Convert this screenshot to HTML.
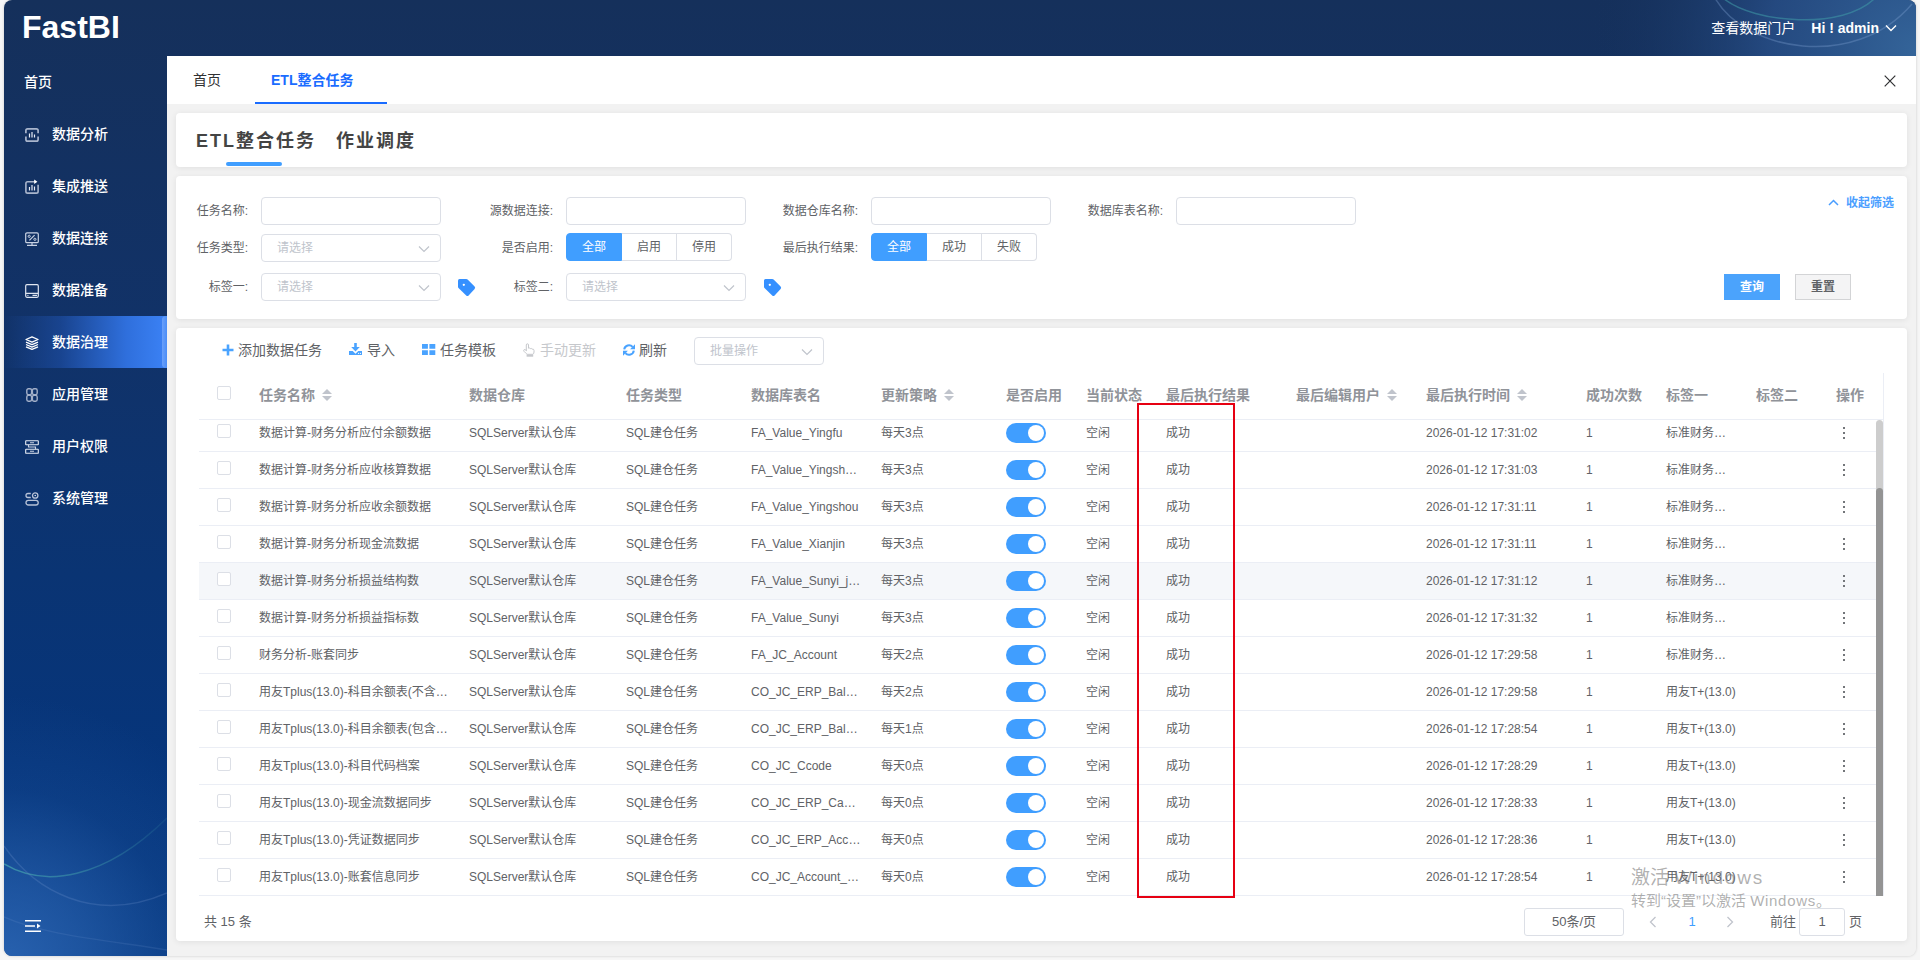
<!DOCTYPE html>
<html lang="zh-CN">
<head>
<meta charset="utf-8">
<title>FastBI - ETL整合任务</title>
<style>
*{box-sizing:border-box;margin:0;padding:0}
html,body{width:1920px;height:960px;overflow:hidden;background:#f6f6f6;font-family:"Liberation Sans","Noto Sans CJK SC",sans-serif;color:#606266;font-size:12px}
.abs{position:absolute}
#win{position:absolute;left:4px;top:0;width:1912px;height:956px;border-radius:8px;overflow:hidden;background:#f2f2f2;box-shadow:0 0 3px rgba(0,0,0,.18)}
#bg{position:absolute;left:0;top:0;width:1912px;height:956px}
#logo{position:absolute;left:18px;top:8px;font-size:32px;font-weight:bold;color:#fff;line-height:38px;letter-spacing:0}
#hdr-r{position:absolute;right:19px;top:0;height:56px;line-height:56px;color:#fff;font-size:14px;white-space:nowrap}
#hdr-r b{margin-left:16px}
#side{position:absolute;left:0;top:56px;width:163px;height:900px}
.mi{position:absolute;left:0;width:163px;height:52px;line-height:52px;color:#fff;font-weight:500;font-size:14px;padding-left:48px;white-space:nowrap}
.mi svg{position:absolute;left:21px;top:20px;width:14px;height:14px}
.mi.act{background:linear-gradient(90deg,rgba(16,50,110,0) 0,rgba(30,80,170,.6) 35%,#2f6fdc 75%,#3b82f6 100%)}
.mi.act:after{content:"";position:absolute;right:0;top:0;width:5px;height:52px;background:linear-gradient(90deg,#6aa0fa,#4a8df7);border-radius:4px 0 0 4px}
#main{position:absolute;left:163px;top:56px;width:1749px;height:900px;background:#f2f2f2}
#tabs{position:absolute;left:0;top:0;width:1749px;height:48px;background:#fff;font-size:14px;color:#303133}
.card{position:absolute;background:#fff;border-radius:4px;box-shadow:0 1px 6px rgba(0,0,0,.08)}
.lbl{position:absolute;height:28px;line-height:28px;text-align:right;font-size:12px;color:#606266;white-space:nowrap}
.inp{position:absolute;height:28px;border:1px solid #dcdfe6;border-radius:4px;background:#fff;font-size:12px;line-height:26px;color:#c0c4cc;padding-left:15px;white-space:nowrap}
.inp svg{position:absolute;right:10px;top:8px;width:12px;height:12px}
.rg{position:absolute;height:28px;display:flex;font-size:12px;line-height:26px;color:#606266}
.rg span{display:block;width:55px;height:28px;text-align:center;border:1px solid #dcdfe6;border-left:0;background:#fff}
.rg span:first-child{width:56px;background:#409eff;border-color:#409eff;color:#fff;border-radius:4px 0 0 4px;border-left:1px solid #409eff}
.rg span:last-child{border-radius:0 4px 4px 0}
.tb{position:absolute;top:8px;height:28px;line-height:28px;font-size:14px;color:#606266;white-space:nowrap}
.tb svg{position:absolute;top:7px;width:14px;height:14px}
table{border-collapse:separate;border-spacing:0;table-layout:fixed}
th,td{padding:0 10px;text-align:left;white-space:nowrap;overflow:hidden;text-overflow:ellipsis;border-bottom:1px solid #ebeef5}
th{font-size:14px;font-weight:bold;color:#909399;height:47px;line-height:23px;padding-bottom:1px}
td{font-size:12px;color:#606266;height:37px;line-height:23px}
.cb{display:inline-block;width:14px;height:14px;border:1px solid #dcdfe6;border-radius:2px;background:#fff;vertical-align:middle;position:relative;top:-2px}
th .cb{top:-3px}
.sw{display:block;width:40px;height:20px;border-radius:10px;background:#409eff;position:relative}
.sw:after{content:"";position:absolute;left:22px;top:2px;width:16px;height:16px;border-radius:8px;background:#fff}
.sort{display:inline-block;width:10px;height:14px;position:relative;vertical-align:middle;margin-left:7px;top:-1px}
.sort:before,.sort:after{content:"";position:absolute;left:0;border:5px solid transparent}
.sort:before{top:-4px;border-bottom-color:#c0c4cc}
.sort:after{top:8px;border-top-color:#c0c4cc}
.more{display:block;width:3px;margin-left:7px}
.more i{display:block;width:2px;height:2px;background:#73767a;margin:3px 0;border-radius:0}
tr.hv td{background:#f5f7fa}
</style>
</head>
<body>
<div id="win">
<svg id="bg" viewBox="0 0 1912 956">
<defs>
<linearGradient id="g1" x1="0" y1="0" x2="0" y2="1"><stop offset="0" stop-color="#15305b"/><stop offset=".35" stop-color="#113268"/><stop offset=".6" stop-color="#0a3473"/><stop offset=".8" stop-color="#06357b"/><stop offset="1" stop-color="#083a81"/></linearGradient>
<linearGradient id="lt" x1="0" y1="0" x2="163" y2="0" gradientUnits="userSpaceOnUse"><stop offset="0" stop-color="#45a3b0" stop-opacity=".75"/><stop offset=".5" stop-color="#3f9aa8" stop-opacity=".5"/><stop offset="1" stop-color="#3f9aa8" stop-opacity=".12"/></linearGradient>
<radialGradient id="g2" cx="0" cy="965" r="270" gradientUnits="userSpaceOnUse"><stop offset="0" stop-color="#2a64b2" stop-opacity=".95"/><stop offset=".3" stop-color="#2a64b2" stop-opacity=".62"/><stop offset=".65" stop-color="#2a64b2" stop-opacity=".16"/><stop offset="1" stop-color="#2a64b2" stop-opacity="0"/></radialGradient>
<radialGradient id="g3" cx="1912" cy="50" r="330" gradientUnits="userSpaceOnUse"><stop offset="0" stop-color="#346499"/><stop offset=".45" stop-color="#284f88" stop-opacity=".8"/><stop offset="1" stop-color="#15305b" stop-opacity="0"/></radialGradient>
</defs>
<clipPath id="cp"><path d="M0 0 H1912 V56 H163 V956 H0 Z"/></clipPath>
<g clip-path="url(#cp)"><rect width="1912" height="956" fill="url(#g1)"/>
<rect width="400" height="956" fill="url(#g2)"/>
<rect x="1500" width="412" height="60" fill="url(#g3)"/></g>
<g fill="none" stroke-width="1.5" clip-path="url(#cp)">
<path d="M0 864 C 40 888, 100 880, 163 818" stroke="url(#lt)"/>
<path d="M0 846 C 30 890, 90 925, 163 893" stroke="#7f9fd6" stroke-opacity=".22"/>
<path d="M0 917 C 40 935, 100 940, 163 950" stroke="#7f9fd6" stroke-opacity=".15"/>
<path d="M1719 -2 C 1750 24, 1840 30, 1871 -2" stroke="#3f9aa8" stroke-opacity=".55"/>
<path d="M1711 -2 C 1740 50, 1850 72, 1908 4" stroke="#7da0d0" stroke-opacity=".35"/>
</g>
</svg>
<div id="logo">FastBI</div>
<div id="hdr-r">查看数据门户<b>Hi ! admin</b><svg style="margin-left:6px;vertical-align:-1px" width="12" height="12" viewBox="0 0 12 12"><path d="M1 3.5 L6 8.5 L11 3.5" fill="none" stroke="#fff" stroke-width="1.4"/></svg></div>

<div id="side">
<div class="mi" style="top:0;padding-left:20px">首页</div>
<div class="mi" style="top:52px"><svg viewBox="0 0 14 14" fill="none" stroke="#a9b5cc" stroke-width="1.7"><path d="M0.9 5.2 V2.6 Q0.9 0.9 2.6 0.9 H11.4 Q13.1 0.9 13.1 2.6 V5.2 M0.9 8.6 V11.4 Q0.9 13.1 2.6 13.1 H11.4 Q13.1 13.1 13.1 11.4 V8.6"/><path d="M4.5 5.5 V9.5 M7 4 V9.5 M9.5 6.5 V9.5" stroke="#e6ebf5" stroke-width="1.2"/></svg>数据分析</div>
<div class="mi" style="top:104px"><svg viewBox="0 0 14 14" fill="none" stroke="#a9b5cc" stroke-width="1.6" style="overflow:visible"><path d="M10.5 1.8 H2.6 Q0.9 1.8 0.9 3.5 V11.4 Q0.9 13.1 2.6 13.1 H11.4 Q13.1 13.1 13.1 11.4 V4.8"/><path d="M9.2 -0.4 L12.4 1.8 L9.2 4 Z" fill="#fff" stroke="none"/><path d="M4.5 7 V10.5 M7 5 V10.5 M9.5 6.5 V10.5" stroke="#e6ebf5" stroke-width="1.2"/></svg>集成推送</div>
<div class="mi" style="top:156px"><svg viewBox="0 0 14 14" fill="none" stroke="#c9d2e3" stroke-width="1.2"><rect x="0.7" y="0.9" width="12.6" height="9.8" rx="1.3"/><path d="M2 13.3 H12 M7 10.7 V13.3 M4.4 8.4 L9.6 3.2"/><circle cx="4.2" cy="4.3" r="1.1" stroke-width="1"/><circle cx="9.9" cy="7.3" r="1.1" stroke-width="1"/></svg>数据连接</div>
<div class="mi" style="top:208px"><svg viewBox="0 0 14 14" fill="none" stroke="#dfe5f0" stroke-width="1.2"><rect x="0.7" y="0.7" width="12.6" height="12.6" rx="1.2"/><path d="M0.7 9.4 H13.3 M7.5 11.4 H12"/><circle cx="2.900" cy="11.4" r="0.6" fill="#dfe5f0" stroke="none"/></svg>数据准备</div>
<div class="mi act" style="top:260px"><svg viewBox="0 0 14 14" fill="none" stroke="#fff" stroke-width="1.3" stroke-linejoin="round"><path d="M7 0.9 L13 3.5 L7 6.1 L1 3.5 Z"/><path d="M1 6.1 L7 8.7 L13 6.1 M1 8.5 L7 11.1 L13 8.5 M1 10.8 L7 13.4 L13 10.8"/></svg>数据治理</div>
<div class="mi" style="top:312px"><svg viewBox="0 0 14 14" fill="none" stroke="#a3b0c9" stroke-width="1.4"><rect x="1.8" y="0.8" width="4.8" height="5.8" rx="1.6"/><rect x="7.4" y="0.8" width="4.8" height="5.8" rx="1.6"/><rect x="1.8" y="7.4" width="4.8" height="5.8" rx="1.6"/><rect x="7.4" y="7.4" width="4.8" height="5.8" rx="1.6"/></svg>应用管理</div>
<div class="mi" style="top:364px"><svg viewBox="0 0 14 14" fill="none" stroke="#e6ebf5" stroke-width="1.1"><rect x="0.7" y="0.7" width="12.6" height="4" rx="0.4"/><rect x="0.7" y="9.3" width="12.6" height="4" rx="0.4"/><path d="M5 2.7 H9 M5 11.3 H9 M3.5 4.7 V7 H10.5 V9.3" stroke="#c9d2e3"/></svg>用户权限</div>
<div class="mi" style="top:416px"><svg viewBox="0 0 14 14" fill="none" stroke="#b7c2d7" stroke-width="1.3"><path d="M5.8 1.5 H3 Q1 1.5 1 3.5 Q1 5.500 3 5.5 H5.8"/><circle cx="10.2" cy="3.5" r="2.7"/><circle cx="10.2" cy="3.5" r="0.7" fill="#fff" stroke="none"/><rect x="1" y="8.3" width="12.2" height="4.7" rx="2.3"/></svg>系统管理</div>
<svg style="position:absolute;left:21px;top:864px" width="16" height="12" viewBox="0 0 16 12"><path d="M0 0.8 H16 M0 6 H10 M0 11.2 H16" stroke="#fff" stroke-width="1.5" fill="none"/><path d="M12 3.5 L15.5 6 L12 8.5 Z" fill="#fff"/></svg>
</div>

<div id="main">
<div id="tabs">
<div class="abs" style="left:26px;top:0;line-height:48px">首页</div>
<div class="abs" style="left:104px;top:0;line-height:48px;color:#1a6cff;font-weight:bold">ETL整合任务</div>
<div class="abs" style="left:88px;top:46px;width:132px;height:2px;background:#1a6cff"></div>
<svg class="abs" style="left:1717px;top:19px" width="12" height="12" viewBox="0 0 12 12"><path d="M0.7 0.7 L11.3 11.3 M11.3 0.7 L0.7 11.3" stroke="#303133" stroke-width="1.2" fill="none"/></svg>
</div>
<div class="card" style="left:9px;top:57px;width:1731px;height:54px">
<div class="abs" style="left:20px;top:14px;font-size:18px;line-height:28px;font-weight:bold;letter-spacing:2px;color:#444;white-space:nowrap">ETL整合任务</div>
<div class="abs" style="left:160px;top:14px;font-size:18px;line-height:28px;font-weight:bold;letter-spacing:2px;color:#444;white-space:nowrap">作业调度</div>
<div class="abs" style="left:50px;top:49px;width:56px;height:4px;border-radius:2px;background:#409eff"></div>
</div>
<div class="card" style="left:9px;top:120px;width:1731px;height:143px">
<div class="lbl" style="left:-78px;top:21px;width:150px">任务名称:</div><div class="inp" style="left:85px;top:21px;width:180px"></div>
<div class="lbl" style="left:227px;top:21px;width:150px">源数据连接:</div><div class="inp" style="left:390px;top:21px;width:180px"></div>
<div class="lbl" style="left:532px;top:21px;width:150px">数据仓库名称:</div><div class="inp" style="left:695px;top:21px;width:180px"></div>
<div class="lbl" style="left:837px;top:21px;width:150px">数据库表名称:</div><div class="inp" style="left:1000px;top:21px;width:180px"></div>
<div class="lbl" style="left:-78px;top:58px;width:150px">任务类型:</div><div class="inp" style="left:85px;top:58px;width:180px">请选择<svg viewBox="0 0 12 12"><path d="M1 3.5 L6 8.5 L11 3.5" fill="none" stroke="#c0c4cc" stroke-width="1.2"/></svg></div>
<div class="lbl" style="left:227px;top:58px;width:150px">是否启用:</div><div class="rg" style="left:390px;top:57px"><span>全部</span><span>启用</span><span>停用</span></div>
<div class="lbl" style="left:532px;top:58px;width:150px">最后执行结果:</div><div class="rg" style="left:695px;top:57px"><span>全部</span><span>成功</span><span>失败</span></div>
<div class="lbl" style="left:-78px;top:97px;width:150px">标签一:</div><div class="inp" style="left:85px;top:97px;width:180px">请选择<svg viewBox="0 0 12 12"><path d="M1 3.5 L6 8.5 L11 3.5" fill="none" stroke="#c0c4cc" stroke-width="1.2"/></svg></div><svg class="abs" style="left:282px;top:103px" width="18" height="18" viewBox="0 0 18 18"><path d="M0 1.5 Q0 0 1.5 0 H8.3 Q9 0 9.6 0.6 L16.6 7.6 Q17.7 8.8 16.6 10 L10.6 16.4 Q9.4 17.5 8.2 16.4 L0.5 9 Q0 8.5 0 7.8 Z" fill="#3590ff"/><circle cx="5.8" cy="5.8" r="1.15" fill="#fff"/></svg>
<div class="lbl" style="left:227px;top:97px;width:150px">标签二:</div><div class="inp" style="left:390px;top:97px;width:180px">请选择<svg viewBox="0 0 12 12"><path d="M1 3.5 L6 8.5 L11 3.5" fill="none" stroke="#c0c4cc" stroke-width="1.2"/></svg></div><svg class="abs" style="left:588px;top:103px" width="18" height="18" viewBox="0 0 18 18"><path d="M0 1.5 Q0 0 1.5 0 H8.3 Q9 0 9.6 0.6 L16.6 7.6 Q17.7 8.8 16.6 10 L10.6 16.4 Q9.4 17.5 8.2 16.4 L0.5 9 Q0 8.5 0 7.8 Z" fill="#3590ff"/><circle cx="5.8" cy="5.8" r="1.15" fill="#fff"/></svg>
<div class="abs" style="left:1652px;top:18px;line-height:18px;font-size:12px;font-weight:bold;color:#4a9eff;white-space:nowrap"><svg style="vertical-align:-1px;margin-right:7px" width="11" height="11" viewBox="0 0 11 11"><path d="M1 8 L5.500 3.500 L10 8" fill="none" stroke="#4a9eff" stroke-width="1.5"/></svg>收起筛选</div>
<div class="abs" style="left:1548px;top:98px;width:56px;height:26px;line-height:26px;text-align:center;background:#4ba3fc;color:#fff;font-weight:bold;font-size:12px">查询</div>
<div class="abs" style="left:1619px;top:98px;width:56px;height:26px;line-height:24px;text-align:center;background:#f4f4f5;border:1px solid #d3d4d6;color:#606266;font-weight:bold;font-size:12px">重置</div>
</div>
<div class="card" style="left:9px;top:272px;width:1731px;height:613px">
<div class="tb" style="left:62px"><svg style="left:-17px" viewBox="0 0 14 14"><path d="M7 1.5 V12.5 M1.5 7 H12.5" stroke="#4aa3ff" stroke-width="2.6" fill="none"/></svg>添加数据任务</div>
<div class="tb" style="left:191px"><svg style="left:-18px;width:13px;height:12px" viewBox="0 0 13 12"><path d="M5.2 0 H7.8 V4 H10.8 L6.5 8.4 L2.2 4 H5.2 Z M0 8 H3.7 L6.5 10.8 L9.3 8 H13 V12 H0 Z" fill="#4aa3ff"/><circle cx="9.6" cy="10.4" r="0.55" fill="#fff"/><circle cx="11.4" cy="10.4" r="0.55" fill="#fff"/></svg>导入</div>
<div class="tb" style="left:264px"><svg style="left:-18px" viewBox="0 0 14 14"><path d="M0 1 H5.9 V5.8 H0 Z M7.4 1 H13.3 V5.8 H7.4 Z M0 7.2 H5.9 V12 H0 Z M7.4 7.2 H13.3 V12 H7.4 Z" fill="#4aa3ff"/></svg>任务模板</div>
<div class="tb" style="left:364px;color:#c6c8cc"><svg style="left:-18px" viewBox="0 0 14 14"><path d="M4.3 8 V2 Q4.3 0.8 5.4 0.8 Q6.5 0.8 6.5 2 V5.2 Q7.5 4.600 8.3 5.6 Q9.3 5 10.1 6.1 Q12 5.8 12 7.5 V9 Q12 10.300 11 11.3 H5 Q3.6 10 2 8.3 Q1.2 7.2 2.2 6.6 Q3 6.2 4.300 7.6" fill="none" stroke="#c6c8cc" stroke-width="1"/><rect x="4.6" y="11.7" width="6.6" height="2" fill="#c6c8cc"/></svg>手动更新</div>
<div class="tb" style="left:463px"><svg style="left:-17px" viewBox="0 0 14 14"><path d="M2.2 6.400 A4.800 4.800 0 0 1 10.600 3.900" fill="none" stroke="#4aa3ff" stroke-width="2"/><path d="M13 1.300 V6.200 H8.100 Z" fill="#4aa3ff"/><path d="M11.800 7.600 A4.800 4.800 0 0 1 3.400 10.100" fill="none" stroke="#4aa3ff" stroke-width="2"/><path d="M1 12.700 V7.800 H5.900 Z" fill="#4aa3ff"/></svg>刷新</div>
<div class="inp" id="batch" style="left:518px;top:9px;width:130px">批量操作<svg viewBox="0 0 12 12"><path d="M1 3.5 L6 8.5 L11 3.5" fill="none" stroke="#c0c4cc" stroke-width="1.2"/></svg></div>
<div class="abs" style="left:23px;top:45px;width:1684px;height:47px;overflow:hidden;border-bottom:1px solid #ebeef5"><table style="width:1677px"><colgroup><col style="width:50px"><col style="width:210px"><col style="width:157px"><col style="width:125px"><col style="width:130px"><col style="width:125px"><col style="width:80px"><col style="width:80px"><col style="width:130px"><col style="width:130px"><col style="width:160px"><col style="width:80px"><col style="width:90px"><col style="width:80px"><col style="width:50px"></colgroup><tr><th style="padding-left:18px;text-overflow:clip"><span class="cb"></span></th><th>任务名称<span class="sort"></span></th><th>数据仓库</th><th>任务类型</th><th>数据库表名</th><th>更新策略<span class="sort"></span></th><th>是否启用</th><th>当前状态</th><th>最后执行结果</th><th>最后编辑用户<span class="sort"></span></th><th>最后执行时间<span class="sort"></span></th><th>成功次数</th><th>标签一</th><th>标签二</th><th>操作</th></tr></table></div>
<div class="abs" style="left:23px;top:92px;width:1677px;height:476px;overflow:hidden"><table style="width:1677px;margin-top:-5px"><colgroup><col style="width:50px"><col style="width:210px"><col style="width:157px"><col style="width:125px"><col style="width:130px"><col style="width:125px"><col style="width:80px"><col style="width:80px"><col style="width:130px"><col style="width:130px"><col style="width:160px"><col style="width:80px"><col style="width:90px"><col style="width:80px"><col style="width:50px"></colgroup>
<tr><td style="padding-left:18px;text-overflow:clip"><span class="cb"></span></td><td>数据计算-财务分析应付余额数据</td><td>SQLServer默认仓库</td><td>SQL建仓任务</td><td>FA_Value_Yingfu</td><td>每天3点</td><td><span class="sw"></span></td><td>空闲</td><td>成功</td><td></td><td>2026-01-12 17:31:02</td><td>1</td><td>标准财务分析</td><td></td><td><span class="more"><i></i><i></i><i></i></span></td></tr>
<tr><td style="padding-left:18px;text-overflow:clip"><span class="cb"></span></td><td>数据计算-财务分析应收核算数据</td><td>SQLServer默认仓库</td><td>SQL建仓任务</td><td>FA_Value_Yingshou_hs</td><td>每天3点</td><td><span class="sw"></span></td><td>空闲</td><td>成功</td><td></td><td>2026-01-12 17:31:03</td><td>1</td><td>标准财务分析</td><td></td><td><span class="more"><i></i><i></i><i></i></span></td></tr>
<tr><td style="padding-left:18px;text-overflow:clip"><span class="cb"></span></td><td>数据计算-财务分析应收余额数据</td><td>SQLServer默认仓库</td><td>SQL建仓任务</td><td>FA_Value_Yingshou</td><td>每天3点</td><td><span class="sw"></span></td><td>空闲</td><td>成功</td><td></td><td>2026-01-12 17:31:11</td><td>1</td><td>标准财务分析</td><td></td><td><span class="more"><i></i><i></i><i></i></span></td></tr>
<tr><td style="padding-left:18px;text-overflow:clip"><span class="cb"></span></td><td>数据计算-财务分析现金流数据</td><td>SQLServer默认仓库</td><td>SQL建仓任务</td><td>FA_Value_Xianjin</td><td>每天3点</td><td><span class="sw"></span></td><td>空闲</td><td>成功</td><td></td><td>2026-01-12 17:31:11</td><td>1</td><td>标准财务分析</td><td></td><td><span class="more"><i></i><i></i><i></i></span></td></tr>
<tr class="hv"><td style="padding-left:18px;text-overflow:clip"><span class="cb"></span></td><td>数据计算-财务分析损益结构数</td><td>SQLServer默认仓库</td><td>SQL建仓任务</td><td>FA_Value_Sunyi_jg_data</td><td>每天3点</td><td><span class="sw"></span></td><td>空闲</td><td>成功</td><td></td><td>2026-01-12 17:31:12</td><td>1</td><td>标准财务分析</td><td></td><td><span class="more"><i></i><i></i><i></i></span></td></tr>
<tr><td style="padding-left:18px;text-overflow:clip"><span class="cb"></span></td><td>数据计算-财务分析损益指标数</td><td>SQLServer默认仓库</td><td>SQL建仓任务</td><td>FA_Value_Sunyi</td><td>每天3点</td><td><span class="sw"></span></td><td>空闲</td><td>成功</td><td></td><td>2026-01-12 17:31:32</td><td>1</td><td>标准财务分析</td><td></td><td><span class="more"><i></i><i></i><i></i></span></td></tr>
<tr><td style="padding-left:18px;text-overflow:clip"><span class="cb"></span></td><td>财务分析-账套同步</td><td>SQLServer默认仓库</td><td>SQL建仓任务</td><td>FA_JC_Account</td><td>每天2点</td><td><span class="sw"></span></td><td>空闲</td><td>成功</td><td></td><td>2026-01-12 17:29:58</td><td>1</td><td>标准财务分析</td><td></td><td><span class="more"><i></i><i></i><i></i></span></td></tr>
<tr><td style="padding-left:18px;text-overflow:clip"><span class="cb"></span></td><td>用友Tplus(13.0)-科目余额表(不含未记账)</td><td>SQLServer默认仓库</td><td>SQL建仓任务</td><td>CO_JC_ERP_Balance</td><td>每天2点</td><td><span class="sw"></span></td><td>空闲</td><td>成功</td><td></td><td>2026-01-12 17:29:58</td><td>1</td><td>用友T+(13.0)</td><td></td><td><span class="more"><i></i><i></i><i></i></span></td></tr>
<tr><td style="padding-left:18px;text-overflow:clip"><span class="cb"></span></td><td>用友Tplus(13.0)-科目余额表(包含未记账)</td><td>SQLServer默认仓库</td><td>SQL建仓任务</td><td>CO_JC_ERP_Balance_all</td><td>每天1点</td><td><span class="sw"></span></td><td>空闲</td><td>成功</td><td></td><td>2026-01-12 17:28:54</td><td>1</td><td>用友T+(13.0)</td><td></td><td><span class="more"><i></i><i></i><i></i></span></td></tr>
<tr><td style="padding-left:18px;text-overflow:clip"><span class="cb"></span></td><td>用友Tplus(13.0)-科目代码档案</td><td>SQLServer默认仓库</td><td>SQL建仓任务</td><td>CO_JC_Ccode</td><td>每天0点</td><td><span class="sw"></span></td><td>空闲</td><td>成功</td><td></td><td>2026-01-12 17:28:29</td><td>1</td><td>用友T+(13.0)</td><td></td><td><span class="more"><i></i><i></i><i></i></span></td></tr>
<tr><td style="padding-left:18px;text-overflow:clip"><span class="cb"></span></td><td>用友Tplus(13.0)-现金流数据同步</td><td>SQLServer默认仓库</td><td>SQL建仓任务</td><td>CO_JC_ERP_Cashflow</td><td>每天0点</td><td><span class="sw"></span></td><td>空闲</td><td>成功</td><td></td><td>2026-01-12 17:28:33</td><td>1</td><td>用友T+(13.0)</td><td></td><td><span class="more"><i></i><i></i><i></i></span></td></tr>
<tr><td style="padding-left:18px;text-overflow:clip"><span class="cb"></span></td><td>用友Tplus(13.0)-凭证数据同步</td><td>SQLServer默认仓库</td><td>SQL建仓任务</td><td>CO_JC_ERP_Accvouch</td><td>每天0点</td><td><span class="sw"></span></td><td>空闲</td><td>成功</td><td></td><td>2026-01-12 17:28:36</td><td>1</td><td>用友T+(13.0)</td><td></td><td><span class="more"><i></i><i></i><i></i></span></td></tr>
<tr><td style="padding-left:18px;text-overflow:clip"><span class="cb"></span></td><td>用友Tplus(13.0)-账套信息同步</td><td>SQLServer默认仓库</td><td>SQL建仓任务</td><td>CO_JC_Account_info</td><td>每天0点</td><td><span class="sw"></span></td><td>空闲</td><td>成功</td><td></td><td>2026-01-12 17:28:54</td><td>1</td><td>用友T+(13.0)</td><td></td><td><span class="more"><i></i><i></i><i></i></span></td></tr>
</table></div>
<div class="abs" style="left:1707px;top:45px;width:1px;height:523px;background:#ebeef5"></div>
<div class="abs" style="left:1700px;top:92px;width:7px;height:476px;background:#cdcdcd;border-radius:4px 4px 0 0"></div>
<div class="abs" style="left:1700px;top:160px;width:7px;height:408px;background:#949494;border-radius:4px 4px 0 0"></div>
<div class="abs" style="left:28px;top:580px;line-height:28px;font-size:13px;color:#606266">共 15 条</div>
<div class="abs" style="left:1348px;top:580px;width:100px;height:28px;border:1px solid #dcdfe6;border-radius:3px;line-height:26px;text-align:center;font-size:13px;color:#606266">50条/页</div>
<svg class="abs" style="left:1473px;top:588px" width="8" height="12" viewBox="0 0 8 12"><path d="M6.500 1 L1.500 6 L6.500 11" fill="none" stroke="#c0c4cc" stroke-width="1.300"/></svg>
<div class="abs" style="left:1502px;top:580px;width:28px;line-height:28px;text-align:center;font-size:13px;color:#409eff">1</div>
<svg class="abs" style="left:1550px;top:588px" width="8" height="12" viewBox="0 0 8 12"><path d="M1.500 1 L6.500 6 L1.500 11" fill="none" stroke="#c0c4cc" stroke-width="1.300"/></svg>
<div class="abs" style="left:1594px;top:580px;line-height:28px;font-size:13px;color:#606266">前往</div>
<div class="abs" style="left:1623px;top:580px;width:46px;height:28px;border:1px solid #dcdfe6;border-radius:3px;line-height:26px;text-align:center;font-size:13px;color:#606266">1</div>
<div class="abs" style="left:1673px;top:580px;line-height:28px;font-size:13px;color:#606266">页</div>
<div class="abs" style="left:961px;top:75px;width:98px;height:495px;border:2px solid #e60012"></div>
<div class="abs" style="left:1455px;top:538px;font-size:19px;line-height:24px;color:rgba(110,110,110,.55);white-space:nowrap">激活 <span style="letter-spacing:1.8px">Windows</span></div>
<div class="abs" style="left:1455px;top:563px;font-size:15px;line-height:20px;color:rgba(110,110,110,.55);white-space:nowrap">转到“设置”以激活 <span style="letter-spacing:.7px">Windows</span>。</div>
</div>
</div>
</div>
</body>
</html>
